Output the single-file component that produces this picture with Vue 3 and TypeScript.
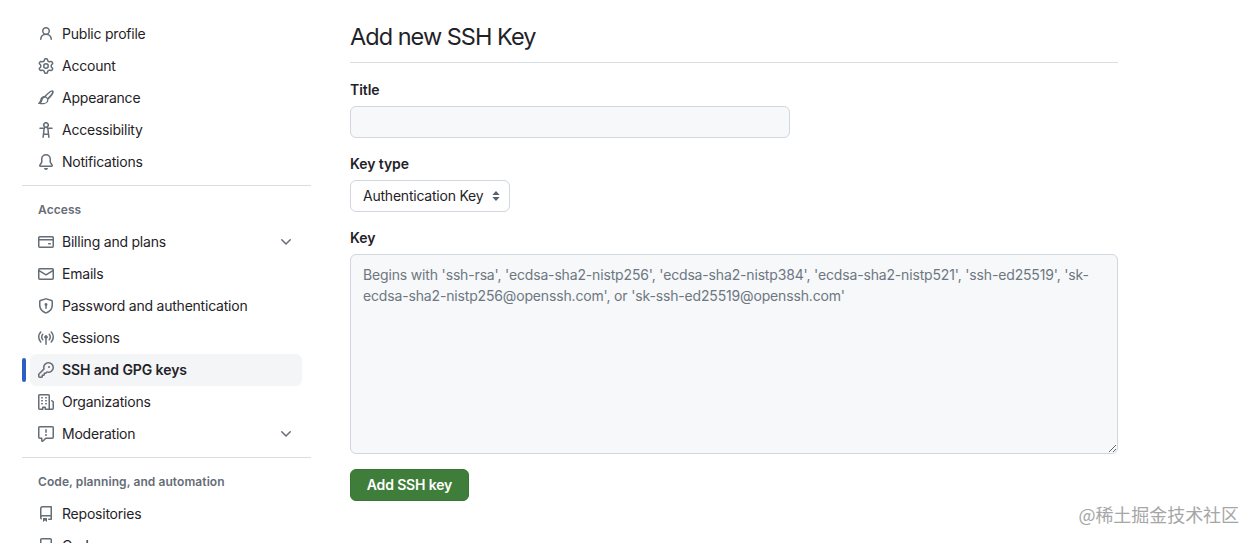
<script setup lang="ts">
interface NavItem { label: string; icon: string; chevron?: boolean; active?: boolean }
interface NavGroup { heading?: string; items: NavItem[] }

const icons: Record<string, string> = {
  person: 'M10.561 8.073a6.005 6.005 0 0 1 3.432 5.142.75.75 0 1 1-1.498.07 4.5 4.5 0 0 0-8.99 0 .75.75 0 1 1-1.498-.07 6.004 6.004 0 0 1 3.431-5.142 3.999 3.999 0 1 1 5.123 0ZM10.5 5a2.5 2.5 0 1 0-5 0 2.5 2.5 0 0 0 5 0Z',
  gear: 'M8 0a8.2 8.2 0 0 1 .701.031C9.444.095 9.99.645 10.16 1.29l.288 1.107c.018.066.079.158.212.224.231.114.454.243.668.386.123.082.233.09.299.071l1.103-.303c.644-.176 1.392.021 1.82.63.27.385.506.792.704 1.218.315.675.111 1.422-.364 1.891l-.814.806c-.049.048-.098.147-.088.294.016.257.016.515 0 .772-.01.147.038.246.088.294l.814.806c.475.469.679 1.216.364 1.891a7.977 7.977 0 0 1-.704 1.217c-.428.61-1.176.807-1.82.63l-1.102-.302c-.067-.019-.177-.011-.3.071a5.909 5.909 0 0 1-.668.386c-.133.066-.194.158-.211.224l-.29 1.106c-.168.646-.715 1.196-1.458 1.26a8.006 8.006 0 0 1-1.402 0c-.743-.064-1.289-.614-1.458-1.26l-.289-1.106c-.018-.066-.079-.158-.212-.224a5.738 5.738 0 0 1-.668-.386c-.123-.082-.233-.09-.299-.071l-1.103.303c-.644.176-1.392-.021-1.82-.63a8.12 8.12 0 0 1-.704-1.218c-.315-.675-.111-1.422.363-1.891l.815-.806c.05-.048.098-.147.088-.294a6.214 6.214 0 0 1 0-.772c.01-.147-.038-.246-.088-.294l-.815-.806C.635 6.045.431 5.298.746 4.623a7.92 7.92 0 0 1 .704-1.217c.428-.61 1.176-.807 1.82-.63l1.102.302c.067.019.177.011.3-.071.214-.143.437-.272.668-.386.133-.066.194-.158.211-.224l.29-1.106C6.009.645 6.556.095 7.299.03 7.53.01 7.764 0 8 0Zm-.571 1.525c-.036.003-.108.036-.137.146l-.289 1.105c-.147.561-.549.967-.998 1.189-.173.086-.34.183-.5.29-.417.278-.97.423-1.529.27l-1.103-.303c-.109-.03-.175.016-.195.045-.22.312-.412.644-.573.99-.014.031-.021.11.059.19l.815.806c.411.406.562.957.53 1.456a4.709 4.709 0 0 0 0 .582c.032.499-.119 1.05-.53 1.456l-.815.806c-.081.08-.073.159-.059.19.162.346.353.677.573.989.02.03.085.076.195.046l1.102-.303c.56-.153 1.113-.008 1.53.27.161.107.328.204.501.29.447.222.85.629.997 1.189l.289 1.105c.029.109.101.143.137.146a6.6 6.6 0 0 0 1.142 0c.036-.003.108-.036.137-.146l.289-1.105c.147-.561.549-.967.998-1.189.173-.086.34-.183.5-.29.417-.278.97-.423 1.529-.27l1.103.303c.109.029.175-.016.195-.045.22-.313.411-.644.573-.99.014-.031.021-.11-.059-.19l-.815-.806c-.411-.406-.562-.957-.53-1.456a4.709 4.709 0 0 0 0-.582c-.032-.499.119-1.05.53-1.456l.815-.806c.081-.08.073-.159.059-.19a6.464 6.464 0 0 0-.573-.989c-.02-.03-.085-.076-.195-.046l-1.102.303c-.56.153-1.113.008-1.53-.27a4.44 4.44 0 0 0-.501-.29c-.447-.222-.85-.629-.997-1.189l-.289-1.105c-.029-.11-.101-.143-.137-.146a6.6 6.6 0 0 0-1.142 0ZM11 8a3 3 0 1 1-6 0 3 3 0 0 1 6 0ZM9.5 8a1.5 1.5 0 1 0-3.001.001A1.5 1.5 0 0 0 9.5 8Z',
  accessibility: 'M9.923 5.302c.063.063.122.129.178.198H14A.75.75 0 0 1 14 7h-3.3l.578 5.163.362 2.997a.75.75 0 0 1-1.49.18L9.868 13H6.132l-.282 2.34a.75.75 0 0 1-1.49-.18l.362-2.997L5.3 7H2a.75.75 0 0 1 0-1.5h3.9a2.54 2.54 0 0 1 .176-.198 3 3 0 1 1 3.847 0ZM9.2 7.073h-.001a1.206 1.206 0 0 0-2.398 0L6.305 11.5h3.39ZM9.5 3a1.5 1.5 0 1 0-3.001.001A1.5 1.5 0 0 0 9.5 3Z',
  bell: 'M8 16a2 2 0 0 0 1.985-1.75c.017-.137-.097-.25-.235-.25h-3.5c-.138 0-.252.113-.235.25A2 2 0 0 0 8 16ZM3 5a5 5 0 0 1 10 0v2.947c0 .05.015.098.042.139l1.703 2.555A1.519 1.519 0 0 1 13.482 13H2.518a1.516 1.516 0 0 1-1.263-2.36l1.703-2.554A.255.255 0 0 0 3 7.947Zm5-3.5A3.5 3.5 0 0 0 4.5 5v2.947c0 .346-.102.683-.294.97l-1.703 2.556a.017.017 0 0 0-.003.01l.001.006c0 .002.002.004.004.006l.006.004.007.001h10.964l.007-.001.006-.004.004-.006.001-.007a.017.017 0 0 0-.003-.01l-1.703-2.554a1.745 1.745 0 0 1-.294-.97V5A3.5 3.5 0 0 0 8 1.5Z',
  card: 'M10.75 9a.75.75 0 0 0 0 1.5h1.5a.75.75 0 0 0 0-1.5h-1.5ZM0 3.75C0 2.784.784 2 1.75 2h12.5c.966 0 1.75.784 1.75 1.75v8.5A1.75 1.75 0 0 1 14.25 14H1.75A1.75 1.75 0 0 1 0 12.25ZM14.5 6.5h-13v5.75c0 .138.112.25.25.25h12.5a.25.25 0 0 0 .25-.25Zm0-2.75a.25.25 0 0 0-.25-.25H1.75a.25.25 0 0 0-.25.25V5h13Z',
  mail: 'M1.75 2h12.5c.966 0 1.75.784 1.75 1.75v8.5A1.75 1.75 0 0 1 14.25 14H1.75A1.75 1.75 0 0 1 0 12.25v-8.5C0 2.784.784 2 1.75 2ZM1.5 12.251c0 .138.112.25.25.25h12.5a.25.25 0 0 0 .25-.25V5.809L8.38 9.397a.75.75 0 0 1-.76 0L1.5 5.809v6.442Zm13-8.181v-.32a.25.25 0 0 0-.25-.25H1.75a.25.25 0 0 0-.25.25v.32L8 7.88Z',
  shield: 'm8.533.133 5.25 1.68A1.75 1.75 0 0 1 15 3.48V7c0 1.566-.32 3.182-1.303 4.682-.983 1.498-2.585 2.813-5.032 3.855a1.697 1.697 0 0 1-1.33 0c-2.447-1.042-4.049-2.357-5.032-3.855C1.32 10.182 1 8.566 1 7V3.48a1.75 1.75 0 0 1 1.217-1.667l5.25-1.68a1.748 1.748 0 0 1 1.066 0Zm-.61 1.429.001.001-5.25 1.68a.251.251 0 0 0-.174.237V7c0 1.36.275 2.666 1.057 3.859.784 1.194 2.121 2.342 4.366 3.298a.196.196 0 0 0 .154 0c2.245-.957 3.582-2.103 4.366-3.297C13.225 9.666 13.5 8.358 13.5 7V3.48a.25.25 0 0 0-.174-.238l-5.25-1.68a.25.25 0 0 0-.153 0ZM9.5 6.5c0 .536-.286 1.032-.75 1.3v2.45a.75.75 0 0 1-1.5 0V7.8A1.5 1.5 0 1 1 9.5 6.5Z',
  broadcast: 'M8.75 8.582v5.668a.75.75 0 0 1-1.5 0V8.582a1.75 1.75 0 1 1 1.5 0Zm3.983-7.125a.75.75 0 0 1 1.06.026A7.976 7.976 0 0 1 16 7c0 2.139-.84 4.083-2.207 5.517a.75.75 0 1 1-1.086-1.034A6.474 6.474 0 0 0 14.5 7a6.474 6.474 0 0 0-1.793-4.483.75.75 0 0 1 .026-1.06Zm-9.466 0c.3.286.312.76.026 1.06A6.474 6.474 0 0 0 1.5 7a6.47 6.47 0 0 0 1.793 4.483.75.75 0 0 1-1.086 1.034A7.973 7.973 0 0 1 0 7c0-2.139.84-4.083 2.207-5.517a.75.75 0 0 1 1.06-.026Zm8.556 2.321A4.988 4.988 0 0 1 13 7a4.988 4.988 0 0 1-1.177 3.222.75.75 0 1 1-1.146-.967A3.487 3.487 0 0 0 11.5 7c0-.86-.309-1.645-.823-2.255a.75.75 0 0 1 1.146-.967Zm-6.492.958A3.48 3.48 0 0 0 4.5 7a3.48 3.48 0 0 0 .823 2.255.75.75 0 0 1-1.146.967A4.981 4.981 0 0 1 3 7a4.98 4.98 0 0 1 1.188-3.236.75.75 0 1 1 1.143.972Z',
  key: 'M10.5 0a5.499 5.499 0 1 1-1.288 10.848l-.932.932a.749.749 0 0 1-.53.22H7v.75a.749.749 0 0 1-.22.53l-.5.5a.749.749 0 0 1-.53.22H5v.75a.749.749 0 0 1-.22.53l-.5.5a.749.749 0 0 1-.53.22h-2A1.75 1.75 0 0 1 0 14.25v-2c0-.199.079-.389.22-.53l4.932-4.932A5.5 5.5 0 0 1 10.5 0Zm-4 5.5c-.001.431.069.86.205 1.269a.75.75 0 0 1-.181.768L1.5 12.56v1.69c0 .138.112.25.25.25h1.69l.06-.06v-1.19a.75.75 0 0 1 .75-.75h1.19l.06-.06v-1.19a.75.75 0 0 1 .75-.75h1.19l1.023-1.025a.75.75 0 0 1 .768-.18A4 4 0 1 0 6.5 5.5ZM11 6a1 1 0 1 1 0-2 1 1 0 0 1 0 2Z',
  organization: 'M1.75 16A1.75 1.75 0 0 1 0 14.25V1.75C0 .784.784 0 1.75 0h8.5C11.216 0 12 .784 12 1.75v12.5c0 .085-.006.168-.018.25h2.268a.25.25 0 0 0 .25-.25V8.285a.25.25 0 0 0-.111-.208l-1.055-.703a.749.749 0 1 1 .832-1.248l1.055.703c.487.325.779.871.779 1.456v5.965A1.75 1.75 0 0 1 14.25 16h-3.5a.766.766 0 0 1-.197-.026c-.099.017-.2.026-.303.026h-3a.75.75 0 0 1-.75-.75V14h-1v1.25a.75.75 0 0 1-.75.75Zm-.25-1.75c0 .138.112.25.25.25H4v-1.25a.75.75 0 0 1 .75-.75h2.5a.75.75 0 0 1 .75.75v1.25h2.25a.25.25 0 0 0 .25-.25V1.75a.25.25 0 0 0-.25-.25h-8.5a.25.25 0 0 0-.25.25ZM3.75 6h.5a.75.75 0 0 1 0 1.5h-.5a.75.75 0 0 1 0-1.5ZM3 3.75A.75.75 0 0 1 3.75 3h.5a.75.75 0 0 1 0 1.5h-.5A.75.75 0 0 1 3 3.75Zm4 3A.75.75 0 0 1 7.75 6h.5a.75.75 0 0 1 0 1.5h-.5A.75.75 0 0 1 7 6.75ZM7.75 3h.5a.75.75 0 0 1 0 1.5h-.5a.75.75 0 0 1 0-1.5ZM3 9.75A.75.75 0 0 1 3.75 9h.5a.75.75 0 0 1 0 1.5h-.5A.75.75 0 0 1 3 9.75ZM7.75 9h.5a.75.75 0 0 1 0 1.5h-.5a.75.75 0 0 1 0-1.5Z',
  report: 'M0 1.75C0 .784.784 0 1.75 0h12.5C15.216 0 16 .784 16 1.75v9.5A1.75 1.75 0 0 1 14.25 13H8.06l-2.573 2.573A1.458 1.458 0 0 1 3 14.543V13H1.75A1.75 1.75 0 0 1 0 11.25Zm1.75-.25a.25.25 0 0 0-.25.25v9.5c0 .138.112.25.25.25h2a.75.75 0 0 1 .75.75v2.19l2.72-2.72a.749.749 0 0 1 .53-.22h6.5a.25.25 0 0 0 .25-.25v-9.5a.25.25 0 0 0-.25-.25Zm7 2.25v2.5a.75.75 0 0 1-1.5 0v-2.5a.75.75 0 0 1 1.5 0ZM9 9a1 1 0 1 1-2 0 1 1 0 0 1 2 0Z',
  repo: 'M2 2.5A2.5 2.5 0 0 1 4.5 0h8.75a.75.75 0 0 1 .75.75v12.5a.75.75 0 0 1-.75.75h-2.5a.75.75 0 0 1 0-1.5h1.75v-2h-8a1 1 0 0 0-.714 1.7.75.75 0 1 1-1.072 1.05A2.495 2.495 0 0 1 2 11.5Zm10.5-1h-8a1 1 0 0 0-1 1v6.708A2.486 2.486 0 0 1 4.5 9h8ZM5 12.25a.25.25 0 0 1 .25-.25h3.5a.25.25 0 0 1 .25.25v3.25a.25.25 0 0 1-.4.2l-1.45-1.087a.249.249 0 0 0-.3 0L5.4 15.7a.25.25 0 0 1-.4-.2Z',
  codespaces: 'M0 11.25c0-.966.784-1.75 1.75-1.75h12.5c.966 0 1.75.784 1.75 1.75v3A1.75 1.75 0 0 1 14.25 16H1.75A1.75 1.75 0 0 1 0 14.25Zm2-9.5C2 .784 2.784 0 3.75 0h8.5C13.216 0 14 .784 14 1.75v5a1.75 1.75 0 0 1-1.75 1.75h-8.5A1.75 1.75 0 0 1 2 6.75Zm1.75-.25a.25.25 0 0 0-.25.25v5c0 .138.112.25.25.25h8.5a.25.25 0 0 0 .25-.25v-5a.25.25 0 0 0-.25-.25Zm-2 9.5a.25.25 0 0 0-.25.25v3c0 .138.112.25.25.25h12.5a.25.25 0 0 0 .25-.25v-3a.25.25 0 0 0-.25-.25Z',
  brush: 'M11.134 1.535c.7-.509 1.416-.942 2.076-1.155.649-.21 1.463-.267 2.069.34.603.601.568 1.411.368 2.07-.202.668-.624 1.39-1.125 2.096-1.011 1.424-2.496 2.987-3.775 4.249-.098.097-.198.193-.295.287-.076 1.07-.3 2.29-1.13 3.2-.91.975-2.18 1.35-3.31 1.513a13.2 13.2 0 0 1-3.19.097c-.62-.06-1.9-.25-2.6-.5-.36-.13-.27-.62.03-.83 1.1-.76 1.67-1.9 1.95-3.2.3-1.34 1.03-2.6 2.33-3.22.57-.27 1.18-.38 1.78-.36.11-.13.22-.26.33-.38 1.2-1.3 2.9-2.9 4.49-4.06Zm1.04 1.21c-1.46 1.06-3.06 2.56-4.2 3.78.58.26 1.2.87 1.5 1.5 1.22-1.2 2.66-2.72 3.62-4.06.47-.66.78-1.22.92-1.66.13-.43.02-.55-.02-.59-.04-.04-.16-.15-.59-.01-.43.14-1.05.49-1.23.54ZM6.2 7.95c-.87.35-1.4 1.15-1.64 2.14-.22 1-.6 2.01-1.3 2.88.8.1 1.8.1 2.7-.03.98-.14 1.9-.45 2.45-1.05.6-.65.73-1.55.74-2.4-.03-.6-.9-1.56-1.6-1.66-.45-.06-.9 0-1.35.12Z',
  chevron: 'M12.78 5.22a.749.749 0 0 1 0 1.06l-4.25 4.25a.749.749 0 0 1-1.06 0L3.22 6.28a.749.749 0 1 1 1.06-1.06L8 8.939l3.72-3.719a.749.749 0 0 1 1.06 0Z'
}

const groups: NavGroup[] = [
  { items: [
    { label: 'Public profile', icon: 'person' },
    { label: 'Account', icon: 'gear' },
    { label: 'Appearance', icon: 'brush' },
    { label: 'Accessibility', icon: 'accessibility' },
    { label: 'Notifications', icon: 'bell' }
  ] },
  { heading: 'Access', items: [
    { label: 'Billing and plans', icon: 'card', chevron: true },
    { label: 'Emails', icon: 'mail' },
    { label: 'Password and authentication', icon: 'shield' },
    { label: 'Sessions', icon: 'broadcast' },
    { label: 'SSH and GPG keys', icon: 'key', active: true },
    { label: 'Organizations', icon: 'organization' },
    { label: 'Moderation', icon: 'report', chevron: true }
  ] },
  { heading: 'Code, planning, and automation', items: [
    { label: 'Repositories', icon: 'repo' },
    { label: 'Codespaces', icon: 'codespaces' }
  ] }
]

const placeholder = "Begins with 'ssh-rsa', 'ecdsa-sha2-nistp256', 'ecdsa-sha2-nistp384', 'ecdsa-sha2-nistp521', 'ssh-ed25519', 'sk-ecdsa-sha2-nistp256@openssh.com', or 'sk-ssh-ed25519@openssh.com'"
</script>

<template>
  <div class="page">
    <aside class="sidebar">
      <section v-for="(group, g) in groups" :key="g" class="group">
        <h3 v-if="group.heading" class="group-heading">{{ group.heading }}</h3>
        <a v-for="item in group.items" :key="item.label" class="nav-item" :class="{ active: item.active }">
          <svg class="icon" viewBox="0 0 16 16" width="16" height="16"><path :d="icons[item.icon]" /></svg>
          <span class="nav-label">{{ item.label }}</span>
          <svg v-if="item.chevron" class="icon" viewBox="0 0 16 16" width="16" height="16"><path :d="icons.chevron" /></svg>
        </a>
      </section>
    </aside>

    <main class="content">
      <h2 class="title">Add new SSH Key</h2>
      <form class="form" @submit.prevent>
        <label class="label" for="title">Title</label>
        <input id="title" class="field title-input" type="text" />

        <label class="label" for="type">Key type</label>
        <div class="select-wrap">
          <select id="type" class="select">
            <option>Authentication Key</option>
          </select>
          <svg class="select-arrows" viewBox="0 0 8 12" width="8" height="12"><path d="M4 1 7.6 5H.4ZM4 11 .4 7h7.2Z" /></svg>
        </div>

        <label class="label" for="key">Key</label>
        <textarea id="key" class="field key-input" :placeholder="placeholder"></textarea>

        <button class="submit" type="submit">Add SSH key</button>
      </form>
    </main>

    <div class="watermark">@稀土掘金技术社区</div>
  </div>
</template>

<style>
html, body { margin: 0; background: #fff; overflow: hidden; }
</style>

<style scoped>
.page {
  position: relative;
  width: 1257px;
  height: 543px;
  overflow: hidden;
  display: flex;
  align-items: flex-start;
  padding-left: 22px;
  box-sizing: border-box;
  font-family: Inter, "Liberation Sans", sans-serif;
  font-size: 14px;
  color: #1f2328;
}
.sidebar {
  width: 289px;
  flex: none;
  padding-top: 18px;
}
.group + .group {
  margin-top: 7px;
  border-top: 1px solid #d8dee4;
}
.group-heading {
  box-sizing: border-box;
  margin: 0;
  height: 40px;
  padding: 6px 0 0 16px;
  display: flex;
  align-items: center;
  font-size: 12px;
  font-weight: 600;
  letter-spacing: 0.08px;
  color: #656d76;
}
.nav-item {
  position: relative;
  box-sizing: border-box;
  display: flex;
  align-items: center;
  gap: 8px;
  width: 272px;
  height: 32px;
  margin-left: 8px;
  padding: 0 8px;
  border-radius: 6px;
  color: #1f2328;
  letter-spacing: -0.22px;
}
.nav-item.active {
  background: #f3f5f7;
  font-weight: 600;
  letter-spacing: -0.08px;
}
.nav-item.active::before {
  content: "";
  position: absolute;
  left: -8px;
  top: 4px;
  width: 4px;
  height: 24px;
  border-radius: 3px;
  background: #2f5fc4;
}
.icon {
  flex: none;
  fill: #656d76;
}
.nav-label {
  flex: 1;
  white-space: nowrap;
  line-height: 20px;
}
.content {
  width: 768px;
  flex: none;
  margin-left: 39px;
}
.title {
  box-sizing: border-box;
  margin: 0;
  height: 63px;
  padding-top: 22px;
  border-bottom: 1px solid #d8dee4;
  font-size: 23.5px;
  line-height: 30px;
  font-weight: 400;
  letter-spacing: -0.98px;
  color: #1f2328;
}
.form {
  display: flex;
  flex-direction: column;
  align-items: flex-start;
  padding-top: 17px;
}
.label {
  font-weight: 600;
  line-height: 20px;
  margin-bottom: 6px;
  letter-spacing: -0.08px;
}
.field {
  box-sizing: border-box;
  display: block;
  background: #f6f8fa;
  border: 1px solid #d0d7de;
  border-radius: 6px;
  padding: 5px 12px;
  font: inherit;
  line-height: 20px;
  letter-spacing: -0.16px;
  color: #1f2328;
  outline: none;
}
.field::placeholder { color: #6e7781; opacity: 1; }
.title-input {
  width: 440px;
  height: 32px;
  margin-bottom: 16px;
}
.select-wrap {
  position: relative;
  width: 160px;
  height: 32px;
  margin-bottom: 16px;
}
.select {
  appearance: none;
  width: 100%;
  height: 100%;
  box-sizing: border-box;
  background: #fff;
  border: 1px solid #d0d7de;
  border-radius: 6px;
  padding: 0 22px 2px 12px;
  font: inherit;
  letter-spacing: -0.22px;
  color: #1f2328;
  outline: none;
}
.select-arrows {
  position: absolute;
  right: 10px;
  top: 10px;
  fill: #57606a;
  pointer-events: none;
}
.key-input {
  width: 768px;
  height: 200px;
  padding-top: 8.5px;
  line-height: 21px;
  resize: vertical;
}
.submit {
  margin-top: 15px;
  width: 119px;
  height: 32px;
  background: #3f7d3a;
  border: 1px solid #3a7436;
  border-radius: 6px;
  color: #fff;
  font: inherit;
  font-weight: 600;
  letter-spacing: -0.15px;
  padding: 0 0 2px;
}
.watermark {
  position: absolute;
  right: 18px;
  top: 503px;
  font-family: "Noto Sans CJK SC", sans-serif;
  font-size: 18px;
  line-height: 22px;
  letter-spacing: -0.05px;
  color: #a6a6a6;
}
</style>
